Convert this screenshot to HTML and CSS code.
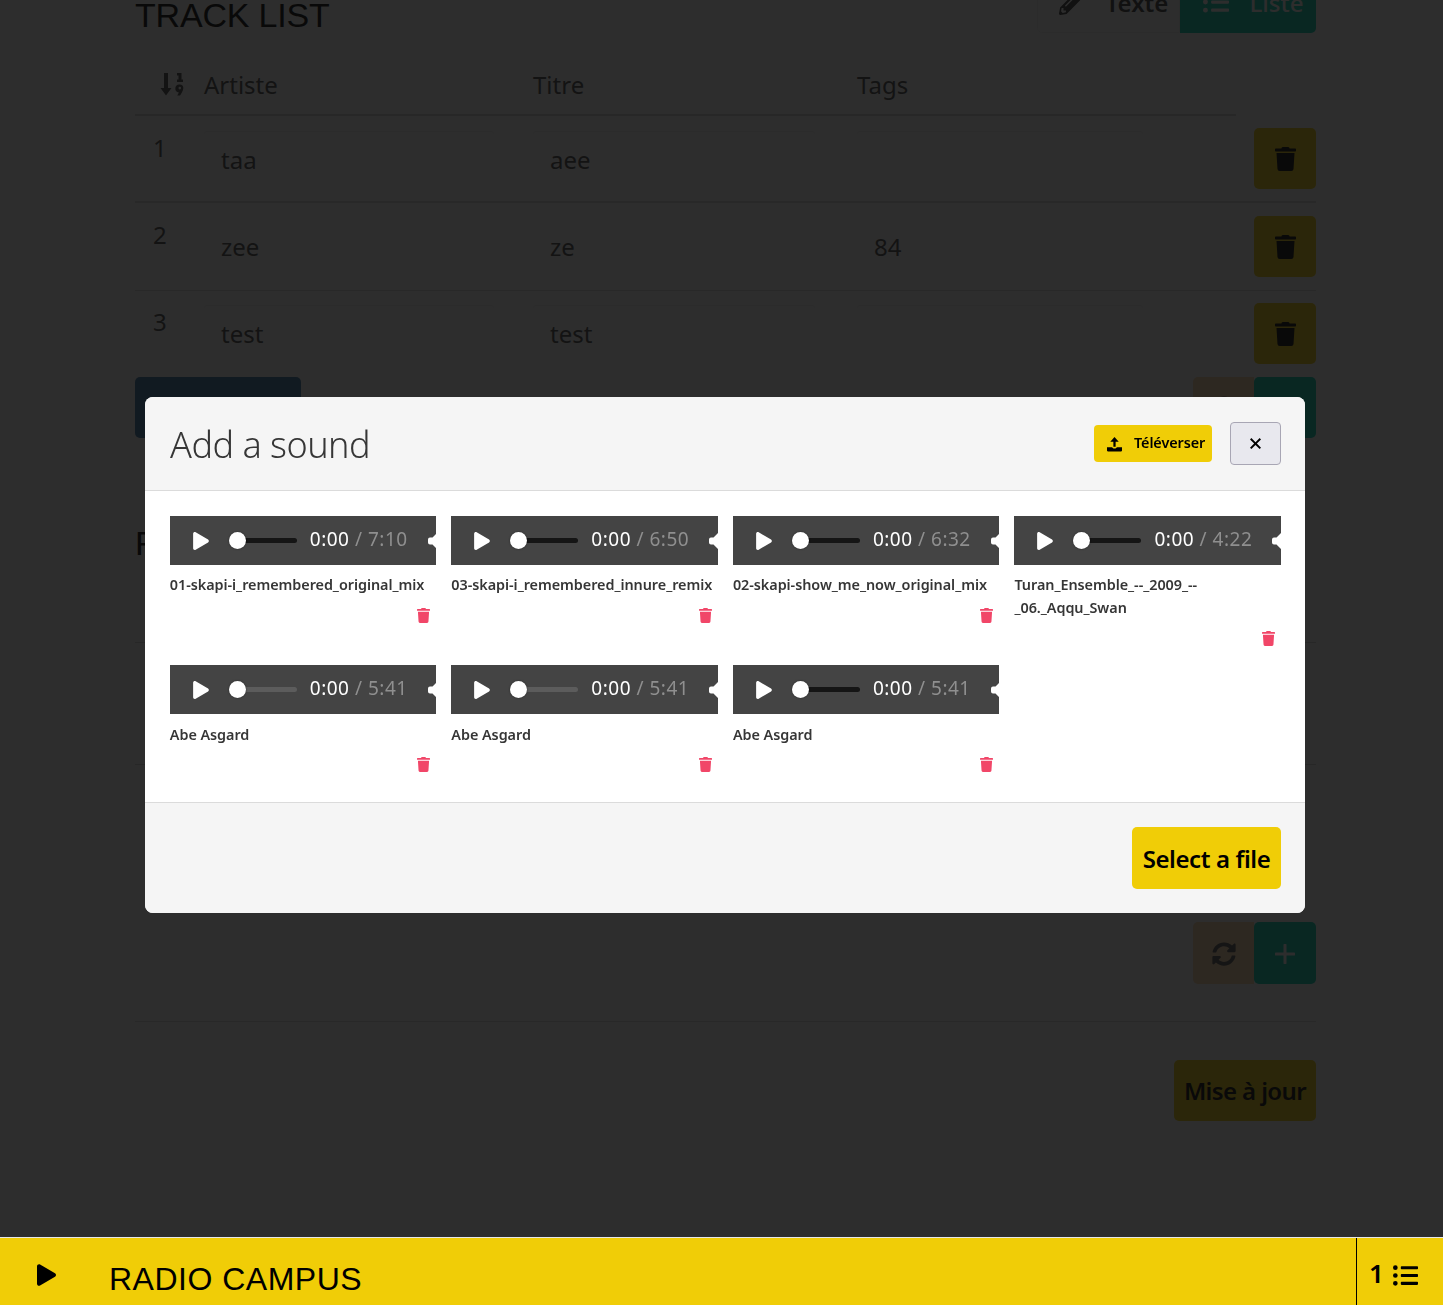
FILE: index.html
```html
<!DOCTYPE html>
<html lang="fr">
<head>
<meta charset="utf-8">
<title>Track list</title>
<link rel="stylesheet" href="styles.css">
</head>
<body>
<svg class="sprite" aria-hidden="true">
  <symbol id="i-trash" viewBox="0 0 448 512"><path d="M432 32H312l-9.4-18.7A24 24 0 0 0 281.1 0H166.8a23.72 23.72 0 0 0-21.4 13.3L136 32H16A16 16 0 0 0 0 48v32a16 16 0 0 0 16 16h416a16 16 0 0 0 16-16V48a16 16 0 0 0-16-16zM53.2 467a48 48 0 0 0 47.9 45h245.8a48 48 0 0 0 47.9-45L416 128H32z"/></symbol>
  <symbol id="i-play" viewBox="0 0 448 512"><path d="M424.4 214.7L72.4 6.6C43.8-10.3 0 6.1 0 47.9V464c0 37.5 40.7 60.1 72.4 41.3l352-208c31.4-18.5 31.5-64.1 0-82.6z"/></symbol>
  <symbol id="i-list" viewBox="0 0 512 512"><path d="M48 48a48 48 0 1 0 48 48 48 48 0 0 0-48-48zm0 160a48 48 0 1 0 48 48 48 48 0 0 0-48-48zm0 160a48 48 0 1 0 48 48 48 48 0 0 0-48-48zm448 16H176a16 16 0 0 0-16 16v32a16 16 0 0 0 16 16h320a16 16 0 0 0 16-16v-32a16 16 0 0 0-16-16zm0-320H176a16 16 0 0 0-16 16v32a16 16 0 0 0 16 16h320a16 16 0 0 0 16-16V80a16 16 0 0 0-16-16zm0 160H176a16 16 0 0 0-16 16v32a16 16 0 0 0 16 16h320a16 16 0 0 0 16-16v-32a16 16 0 0 0-16-16z"/></symbol>
  <symbol id="i-sync" viewBox="0 0 512 512"><path d="M370.72 133.28C339.458 104.008 298.888 87.962 255.848 88c-77.458.068-144.328 53.178-162.791 126.85-1.344 5.363-6.122 9.15-11.651 9.15H24.103c-7.498 0-13.194-6.807-11.807-14.176C33.933 94.924 134.813 8 256 8c66.448 0 126.791 26.136 171.315 68.685L463.03 40.97C478.149 25.851 504 36.559 504 57.941V192c0 13.255-10.745 24-24 24H345.941c-21.382 0-32.09-25.851-16.971-40.971l41.75-41.749zM32 296h134.059c21.382 0 32.09 25.851 16.971 40.971l-41.75 41.75c31.262 29.273 71.835 45.319 114.876 45.28 77.418-.07 144.315-53.144 162.787-126.849 1.344-5.363 6.122-9.15 11.651-9.15h57.304c7.498 0 13.194 6.807 11.807 14.176C478.067 417.076 377.187 504 256 504c-66.448 0-126.791-26.136-171.315-68.685L48.97 471.03C33.851 486.149 8 475.441 8 454.059V320c0-13.255 10.745-24 24-24z"/></symbol>
  <symbol id="i-pencil" viewBox="0 0 512 512"><path d="M497.9 142.1l-46.1 46.1c-4.7 4.7-12.3 4.7-17 0l-111-111c-4.7-4.7-4.7-12.3 0-17l46.1-46.1c18.7-18.7 49.1-18.7 67.9 0l60.1 60.1c18.8 18.7 18.8 49.1 0 67.9zM284.2 99.8L21.6 362.4.4 483.9c-2.9 16.4 11.4 30.6 27.8 27.8l121.5-21.3 262.6-262.6c4.7-4.7 4.7-12.3 0-17l-111-111c-4.8-4.7-12.4-4.7-17.1 0zM124.1 339.9c-5.5-5.5-5.5-14.3 0-19.8l154-154c5.5-5.5 14.3-5.5 19.8 0s5.5 14.3 0 19.8l-154 154c-5.5 5.5-14.3 5.5-19.8 0zM88 424h48v36.3l-64.5 11.3-31.1-31.1L51.7 376H88v48z"/></symbol>
  <symbol id="i-plus" viewBox="0 0 20 20"><path d="M8.500 1a1.500 1.500 0 0 1 3 0v7.500H19a1.500 1.500 0 0 1 0 3h-7.500V19a1.500 1.500 0 0 1-3 0v-7.500H1a1.500 1.500 0 0 1 0-3h7.500z"/></symbol>
  <symbol id="i-sort" viewBox="0 0 24 24"><path d="M4 1h4v15h3.500L6 23.500.5 16H4z"/><path d="M17 1h4.500v6.500H23V10h-6V7.500h1.500V3.500H17z"/><path fill-rule="evenodd" d="M19.800 12.500a3.500 3.500 0 0 1 3.500 3.500c0 2.500-1.700 5-3.300 7.500h-2.800l1.700-3a3.500 3.500 0 0 1 .9-8zm0 2.300a1.300 1.300 0 1 0 0 2.600 1.300 1.300 0 0 0 0-2.600z"/></symbol>
  <symbol id="i-upload" viewBox="0 0 16 16"><path d="M8 0l4.500 5H9.200v5.500H6.800V5H3.500z"/><path d="M0 11h5.500c.4 1 1.400 1.300 2.500 1.300s2.100-.3 2.500-1.300H16v3.500c0 .5-.4 1-1 1H1c-.6 0-1-.5-1-1z"/></symbol>
  <symbol id="i-close" viewBox="0 0 12 12"><path d="M1.500 0L6 4.500 10.500 0 12 1.500 7.500 6l4.500 4.500-1.500 1.500L6 7.500 1.500 12 0 10.500 4.500 6 0 1.500z"/></symbol>
  <symbol id="i-volume" viewBox="0 0 10 18"><path d="M10 0v18L4.500 12.500H2a2 2 0 0 1-2-2v-3a2 2 0 0 1 2-2h2.500z"/></symbol>
</svg>

<main class="page">
  <header class="section-head">
    <h1 class="heading">TRACK LIST</h1>
    <div class="tabs">
      <button class="btn btn-tab btn-light"><svg class="ico ico-24"><use href="#i-pencil"/></svg><span>Texte</span></button>
      <button class="btn btn-tab btn-teal"><svg class="ico ico-24"><use href="#i-list"/></svg><span>Liste</span></button>
    </div>
  </header>

  <div class="table-head">
    <div class="th-sort"><svg class="ico ico-sort"><use href="#i-sort"/></svg></div>
    <div>Artiste</div>
    <div>Titre</div>
    <div>Tags</div>
  </div>

  <div class="track">
    <div class="num">1</div>
    <div class="field">taa</div>
    <div class="field field-title">aee</div>
    <div class="field field-tags"></div>
    <button class="btn btn-square btn-yellow"><svg class="ico ico-trash"><use href="#i-trash"/></svg></button>
  </div>
  <div class="track track-mid">
    <div class="num">2</div>
    <div class="field">zee</div>
    <div class="field field-title">ze</div>
    <div class="field field-tags">84</div>
    <button class="btn btn-square btn-yellow"><svg class="ico ico-trash"><use href="#i-trash"/></svg></button>
  </div>
  <div class="track track-last">
    <div class="num">3</div>
    <div class="field">test</div>
    <div class="field field-title">test</div>
    <div class="field field-tags"></div>
    <button class="btn btn-square btn-yellow"><svg class="ico ico-trash"><use href="#i-trash"/></svg></button>
  </div>

  <div class="actions">
    <button class="btn btn-wide btn-blue"></button>
    <div class="action-pair">
      <button class="btn btn-square btn-tan"><svg class="ico ico-sync"><use href="#i-sync"/></svg></button>
      <button class="btn btn-square btn-teal"><svg class="ico ico-plus"><use href="#i-plus"/></svg></button>
    </div>
  </div>

  <h2 class="heading heading-second">F</h2>
  <div class="blank-row blank-row-a"></div>
  <div class="blank-row blank-row-b"></div>

  <div class="actions actions-second">
    <div class="action-pair">
      <button class="btn btn-square btn-tan"><svg class="ico ico-sync"><use href="#i-sync"/></svg></button>
      <button class="btn btn-square btn-teal"><svg class="ico ico-plus"><use href="#i-plus"/></svg></button>
    </div>
  </div>

  <div class="submit-row">
    <button class="btn btn-submit btn-yellow">Mise à jour</button>
  </div>
</main>

<div class="overlay">
  <section class="modal">
    <header class="modal-head">
      <h2 class="modal-title">Add a sound</h2>
      <button class="btn-upload"><svg class="ico ico-upload"><use href="#i-upload"/></svg><span class="upload-label">Téléverser</span></button>
      <button class="btn-close"><svg class="ico ico-close"><use href="#i-close"/></svg></button>
    </header>
    <div class="modal-body">
      <article class="sound">
        <div class="player"><svg class="ico ico-pplay"><use href="#i-play"/></svg><span class="track-bar"><span class="thumb"></span></span><span class="time">0:00 <span class="dur">/ 7:10</span></span><svg class="ico ico-vol"><use href="#i-volume"/></svg></div>
        <p class="sound-name">01-skapi-i_remembered_original_mix</p>
        <svg class="ico ico-del"><use href="#i-trash"/></svg>
      </article>
      <article class="sound">
        <div class="player"><svg class="ico ico-pplay"><use href="#i-play"/></svg><span class="track-bar"><span class="thumb"></span></span><span class="time">0:00 <span class="dur">/ 6:50</span></span><svg class="ico ico-vol"><use href="#i-volume"/></svg></div>
        <p class="sound-name">03-skapi-i_remembered_innure_remix</p>
        <svg class="ico ico-del"><use href="#i-trash"/></svg>
      </article>
      <article class="sound">
        <div class="player"><svg class="ico ico-pplay"><use href="#i-play"/></svg><span class="track-bar"><span class="thumb"></span></span><span class="time">0:00 <span class="dur">/ 6:32</span></span><svg class="ico ico-vol"><use href="#i-volume"/></svg></div>
        <p class="sound-name">02-skapi-show_me_now_original_mix</p>
        <svg class="ico ico-del"><use href="#i-trash"/></svg>
      </article>
      <article class="sound">
        <div class="player"><svg class="ico ico-pplay"><use href="#i-play"/></svg><span class="track-bar"><span class="thumb"></span></span><span class="time">0:00 <span class="dur">/ 4:22</span></span><svg class="ico ico-vol"><use href="#i-volume"/></svg></div>
        <p class="sound-name">Turan_Ensemble_--_2009_--<br>_06._Aqqu_Swan</p>
        <svg class="ico ico-del"><use href="#i-trash"/></svg>
      </article>
      <article class="sound">
        <div class="player"><svg class="ico ico-pplay"><use href="#i-play"/></svg><span class="track-bar track-bar-idle"><span class="thumb"></span></span><span class="time">0:00 <span class="dur">/ 5:41</span></span><svg class="ico ico-vol"><use href="#i-volume"/></svg></div>
        <p class="sound-name sound-name-low">Abe Asgard</p>
        <svg class="ico ico-del"><use href="#i-trash"/></svg>
      </article>
      <article class="sound">
        <div class="player"><svg class="ico ico-pplay"><use href="#i-play"/></svg><span class="track-bar track-bar-idle"><span class="thumb"></span></span><span class="time">0:00 <span class="dur">/ 5:41</span></span><svg class="ico ico-vol"><use href="#i-volume"/></svg></div>
        <p class="sound-name sound-name-low">Abe Asgard</p>
        <svg class="ico ico-del"><use href="#i-trash"/></svg>
      </article>
      <article class="sound">
        <div class="player"><svg class="ico ico-pplay"><use href="#i-play"/></svg><span class="track-bar"><span class="thumb"></span></span><span class="time">0:00 <span class="dur">/ 5:41</span></span><svg class="ico ico-vol"><use href="#i-volume"/></svg></div>
        <p class="sound-name sound-name-low">Abe Asgard</p>
        <svg class="ico ico-del"><use href="#i-trash"/></svg>
      </article>
    </div>
    <footer class="modal-foot">
      <button class="btn-select">Select a file</button>
    </footer>
  </section>
</div>

<footer class="bar">
  <svg class="ico ico-barplay"><use href="#i-play"/></svg>
  <span class="bar-title">RADIO CAMPUS</span>
  <div class="queue">
    <span class="queue-count">1</span>
    <svg class="ico ico-queue"><use href="#i-list"/></svg>
  </div>
</footer>
</body>
</html>
```

FILE: styles.css
```css
* { box-sizing: border-box; }

html, body { height: 100%; }

body {
  margin: 0;
  background: #fff;
  color: #4a4a4a;
  font-family: "Noto Sans", "Open Sans", sans-serif;
  font-size: 24px;
  overflow: hidden;
}

.sprite { display: none; }
.ico { display: block; fill: currentColor; flex: none; }

button { font-family: inherit; border: 0; padding: 0; cursor: pointer; }

/* ---------- background page ---------- */
.page {
  margin-top: -29px;
  padding: 0 127px 0 135px;
}

.section-head {
  display: flex;
  justify-content: space-between;
  align-items: center;
  height: 62px;
}

.heading {
  margin: 26px 0 0;
  font-family: "Liberation Sans", sans-serif;
  font-weight: 400;
  font-size: 34px;
  letter-spacing: -0.2px;
  color: #000;
}

.tabs { display: flex; }

.btn {
  display: flex;
  align-items: center;
  justify-content: center;
  border-radius: 5px;
  color: #000;
}

.btn-tab {
  height: 62px;
  font-size: 24px;
  font-weight: 600;
  gap: 21px;
}
.btn-light {
  width: 143px;
  padding-left: 10px;
  background: #fff;
  border: 1px solid #f2f2f2;
  color: #3a3a3a;
  border-radius: 5px 0 0 5px;
}
.btn-teal { background: #00d1b2; color: #fff; }
.btn-tab.btn-teal { width: 136px; padding-left: 10px; border-radius: 0 5px 5px 0; font-weight: 500; }
.btn-yellow { background: #f0cd07; }
.btn-tan { background: #fdd9a7; color: #555; border-radius: 5px 0 0 5px; }
.action-pair .btn-teal { border-radius: 5px; }
.btn-blue { background: #3c78a8; }
.btn-square { width: 62px; height: 61px; }
.action-pair .btn-tan { width: 61px; }
.btn-wide { width: 166px; height: 61px; }

.ico-24 { width: 26px; height: 26px; }
.ico-sort { width: 24px; height: 24px; }
.ico-trash { width: 21px; height: 24px; }
.ico-sync { width: 24px; height: 24px; margin-top: 1px; }
.ico-plus { width: 20px; height: 20px; margin-top: 1px; }

.table-head {
  display: grid;
  grid-template-columns: 69px 329px 324px 1fr;
  align-items: center;
  width: 1101px;
  height: 83px;
  padding-top: 21px;
  border-bottom: 2px solid #d0d0d0;
}
.th-sort { padding-left: 25px; }

.track {
  display: grid;
  grid-template-columns: 69px 329px 324px 1fr 62px;
  height: 87px;
  padding-top: 12px;
  border-bottom: 2px solid #dcdcdc;
}
.track-mid { height: 88px; border-bottom-width: 1px; }
.track-mid .btn, .track-last .btn { margin-top: 1px; }
.track-last { border-bottom: 0; height: 86px; padding-top: 11px; }

.num { padding: 2px 0 0 18px; line-height: 36px; }

.field {
  width: 290px;
  height: 62px;
  margin-top: 3px;
  padding: 10px 0 0 17px;
  line-height: 36px;
  border-top: 1px solid #ececec;
  border-radius: 4px;
}
.field-title { width: 282px; }
.field-tags { width: 286px; }
.track-mid .field { border-top-color: #fafafa; }

.actions {
  display: flex;
  justify-content: space-between;
}
.action-pair { display: flex; }

.heading-second { margin-top: 86px; line-height: 38px; }

.blank-row { border-bottom: 1px solid #d0d0d0; }
.blank-row-a { height: 81px; }
.blank-row-b { height: 122px; }

.actions-second { justify-content: flex-end; margin-top: 157px; }
.actions-second .btn { height: 62px; }

.submit-row {
  display: flex;
  justify-content: flex-end;
  margin-top: 37px;
  padding-top: 38px;
  border-top: 1px solid #dcdcdc;
}
.btn-submit {
  width: 142px;
  height: 61px;
  font-size: 24px;
  font-weight: 600;
  letter-spacing: -0.6px;
}

/* ---------- modal ---------- */
.overlay {
  position: fixed;
  inset: 0;
  z-index: 10;
  display: flex;
  align-items: center;
  justify-content: center;
  padding: 5px 0 0 7px;
  background: rgba(10, 10, 10, 0.86);
}

.modal {
  width: 1160px;
  border-radius: 8px;
  overflow: hidden;
  background: #fff;
}

.modal-head {
  display: flex;
  align-items: center;
  height: 94px;
  padding: 0 24px 0 25px;
  background: #f5f5f5;
  border-bottom: 1px solid #dbdbdb;
}

.modal-title {
  flex: 1;
  margin: 2px 0 0;
  font-size: 36px;
  font-weight: 300;
  color: #363636;
  letter-spacing: -0.5px;
}

.btn-upload {
  display: flex;
  align-items: center;
  gap: 12px;
  width: 118px;
  height: 37px;
  padding-left: 13px;
  border-radius: 4px;
  background: #f0cd07;
  color: #000;
  font-size: 14.400px;
  font-weight: 600;
  letter-spacing: -0.1px;
  margin-top: -1px;
}
.upload-label { margin-top: -2px; }
.ico-upload { width: 15px; height: 15px; margin-top: 2px; }

.btn-close {
  display: flex;
  align-items: center;
  justify-content: center;
  width: 51px;
  height: 43px;
  margin-left: 18px;
  margin-top: -1px;
  border: 1px solid #a8a6b4;
  border-radius: 4px;
  background: #e8e8ee;
  color: #000;
}
.ico-close { width: 11px; height: 11px; }

.modal-body {
  display: grid;
  grid-template-columns: repeat(4, 1fr);
  gap: 15px;
  padding: 25px 24px 25px 24.800px;
  height: 311px;
  align-content: start;
}

.sound { min-width: 0; padding-bottom: 4px; }

.player {
  display: flex;
  align-items: center;
  height: 49px;
  padding-left: 23px;
  background: #444;
  color: #fff;
  overflow: hidden;
}
.ico-pplay { width: 16px; height: 18px; }

.track-bar {
  position: relative;
  display: block;
  flex: none;
  width: 60px;
  height: 5px;
  margin-left: 28px;
  border-radius: 3px;
  background: #151515;
}
.track-bar-idle { background: #5c5c5c; }
.thumb {
  position: absolute;
  left: -8px;
  top: -6px;
  width: 17px;
  height: 17px;
  border-radius: 50%;
  background: #fff;
  box-shadow: 0 0 2px rgba(0, 0, 0, 0.5);
}

.time {
  flex: none;
  width: 118px;
  margin: -3px 0 0 13px;
  font-size: 19px;
  letter-spacing: 0.500px;
  color: #fff;
  white-space: nowrap;
}
.dur { color: #8f8f8f; }

.ico-vol { width: 10px; height: 18px; margin-left: 0; }

.sound-name {
  margin: 8px 0 0;
  font-size: 14.400px;
  font-weight: 600;
  line-height: 23px;
  color: #363636;
  letter-spacing: -0.05px;
}
.sound-name-low { margin-top: 9px; }

.ico-del {
  width: 13px;
  height: 15px;
  margin: 12px 6px 0 auto;
  color: #f14668;
}
.sound-name-low + .ico-del { margin-top: 11px; }

.modal-foot {
  display: flex;
  justify-content: flex-end;
  align-items: center;
  height: 111px;
  padding: 0 24px;
  background: #f5f5f5;
  border-top: 1px solid #dbdbdb;
}

.btn-select {
  width: 149px;
  height: 62px;
  border-radius: 5px;
  background: #f0cd07;
  color: #000;
  font-size: 24px;
  font-weight: 600;
  letter-spacing: -0.4px;
}

/* ---------- player bar ---------- */
.bar {
  position: fixed;
  left: 0;
  right: 0;
  bottom: 0;
  z-index: 20;
  display: flex;
  align-items: center;
  height: 68px;
  padding-left: 37px;
  background: #f0cd07;
  border-top: 1px solid #e6e6e6;
  color: #000;
}
.ico-barplay { width: 19px; height: 22px; margin-top: 7px; }
.bar-title {
  flex: 1;
  margin: 15px 0 0 53px;
  font-family: "Liberation Sans", sans-serif;
  font-size: 32px;
  letter-spacing: 0.500px;
}
.queue {
  display: flex;
  align-items: center;
  gap: 9px;
  width: 87px;
  height: 100%;
  padding-left: 12px;
  border-left: 1px solid #000;
}
.queue-count { font-size: 26px; font-weight: 600; margin-top: 3px; }
.ico-queue { width: 25px; height: 25px; margin-top: 7px; }
```
